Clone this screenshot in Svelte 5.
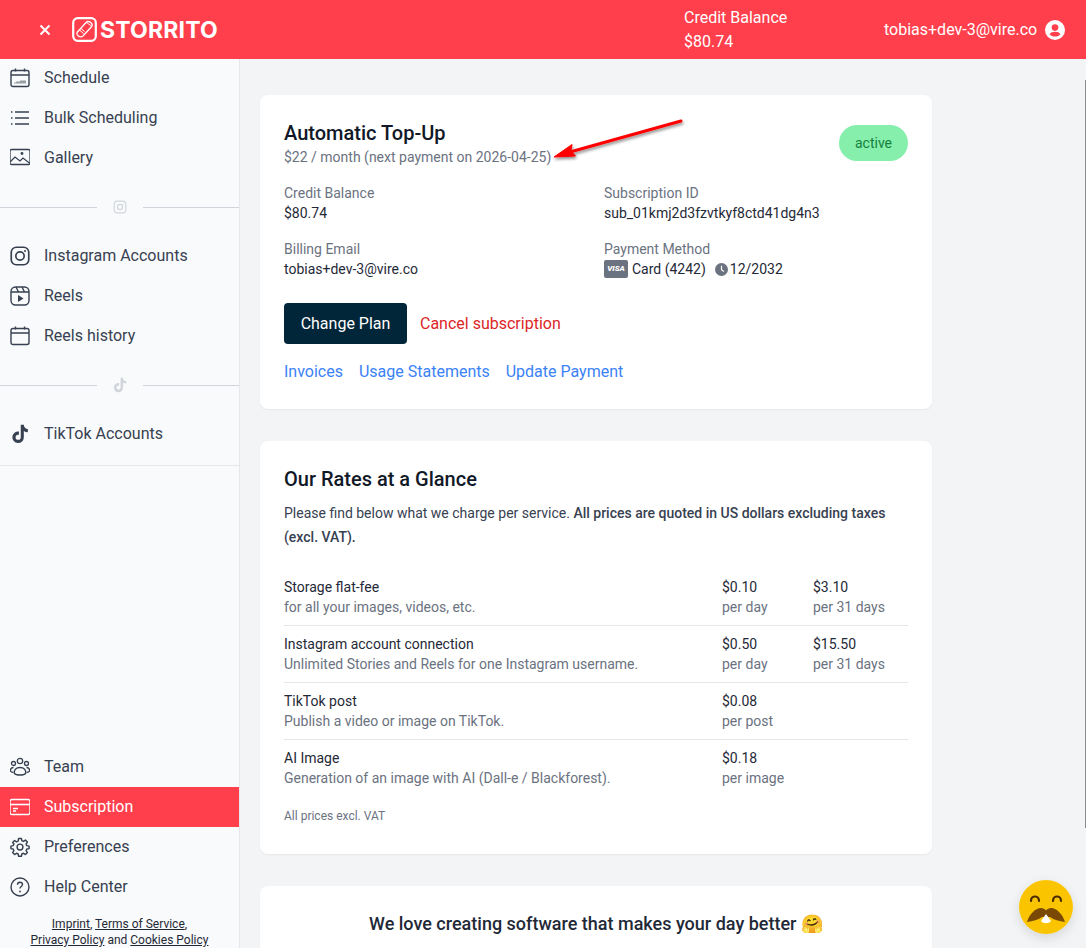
<script lang="ts">
	const rates = [
		{ name: 'Storage flat-fee', desc: 'for all your images, videos, etc.', price: '$0.10', unit: 'per day', month: '$3.10', monthUnit: 'per 31 days' },
		{ name: 'Instagram account connection', desc: 'Unlimited Stories and Reels for one Instagram username.', price: '$0.50', unit: 'per day', month: '$15.50', monthUnit: 'per 31 days' },
		{ name: 'TikTok post', desc: 'Publish a video or image on TikTok.', price: '$0.08', unit: 'per post' },
		{ name: 'AI Image', desc: 'Generation of an image with AI (Dall-e / Blackforest).', price: '$0.18', unit: 'per image' }
	];
</script>

{#snippet tiktok(size)}
	<svg width={size} height={size} viewBox="0 0 24 24" fill="currentColor"><path d="M16.6 1h-3.7v14.9a3.1 3.1 0 1 1-3.1-3.1c.3 0 .6 0 .9.1V9.1a6.9 6.9 0 1 0 5.9 6.8V8.3a8.3 8.3 0 0 0 4.8 1.5V6.1a4.9 4.9 0 0 1-4.8-5.1z"/></svg>
{/snippet}

{#snippet insta(size)}
	<svg width={size} height={size} viewBox="0 0 24 24" fill="none" stroke="currentColor" stroke-width="2"><rect x="2" y="2" width="20" height="20" rx="5.5"/><circle cx="12" cy="12" r="4.4"/><circle cx="17.6" cy="6.4" r="1" fill="currentColor" stroke="none"/></svg>
{/snippet}

<div class="app">
	<header class="topbar">
		<div class="brand">
			<svg class="close" width="12" height="12" viewBox="0 0 12 12" stroke="#fff" stroke-width="2"><path d="M1.5 1.5l9 9M10.5 1.5l-9 9"/></svg>
			<svg class="logo" width="25" height="25" viewBox="0 0 25 25" fill="none" stroke="#fff"><rect x="1.2" y="1.2" width="22.6" height="22.6" rx="4.5" stroke-width="2.2"/><path d="M5 15.5L14 5.5c1-1 3-1.2 4.500-.2 1.500 1 2 3 1 4.500L11 19c-1.500 1.200-3.500 1-5-.2-1.200-1-1.500-2.300-1-3.300z" stroke-width="1.300"/><path d="M14 5.500c1.500.5 4.500 2.500 5.500 4.300M7.500 13l4 3.500M9 11.500l3.500 3" stroke-width="1"/></svg>
			<span class="wordmark">STORRITO</span>
		</div>
		<div class="balance"><div>Credit Balance</div><div>$80.74</div></div>
		<div class="user">
			<span>tobias+dev-3@vire.co</span>
			<svg width="20" height="20" viewBox="0 0 20 20"><circle cx="10" cy="10" r="10" fill="#fff"/><circle cx="10" cy="7.600" r="3.300" fill="#ff3f4c"/><path d="M4.500 14.200c1-1.700 3-2.500 5.500-2.500s4.500.8 5.500 2.500c-1.300 1.500-3.300 2.400-5.500 2.400s-4.200-.9-5.500-2.400z" fill="#ff3f4c"/></svg>
		</div>
	</header>

	<div class="body">
		<aside class="sidebar">
			<nav class="top">
				<a class="item" href="#a">
					<svg width="20" height="20" viewBox="0 0 20 20" fill="none" stroke="currentColor" stroke-width="1.400"><rect x="1" y="2.500" width="18" height="16" rx="2"/><path d="M1 7h18M5.500.5v3M14.500.5v3"/><path d="M5 15.500v-1M7 15.500v-2M9 15.500v-2M11 15.500v-3M13 15.500v-3M15 15.500v-3" stroke-width="1"/></svg>
					Schedule
				</a>
				<a class="item" href="#a">
					<svg width="20" height="20" viewBox="0 0 20 20" fill="none" stroke="currentColor" stroke-width="1.400"><path d="M5 4h14M5 10h14M5 16h14"/><path d="M1 4h1.500M1 10h1.500M1 16h1.500" stroke-dasharray="1.500 0"/></svg>
					Bulk Scheduling
				</a>
				<a class="item" href="#a">
					<svg width="20" height="20" viewBox="0 0 20 20" fill="none" stroke="currentColor" stroke-width="1.300"><rect x="0" y="1.500" width="20" height="15" rx="1.500"/><path d="M0 14l5-5 5 4 3-3 7 5.500"/><circle cx="12" cy="5.500" r=".8" fill="currentColor"/></svg>
					Gallery
				</a>
				<div class="divider"><span class="faint">{@render insta(14)}</span></div>
				<a class="item" href="#a">
					<svg width="20" height="20" viewBox="0 0 24 24" fill="none" stroke="currentColor" stroke-width="2"><rect x="1.500" y="1.500" width="21" height="21" rx="6"/><circle cx="12" cy="12" r="5"/><circle cx="18" cy="6" r="1.200" fill="currentColor" stroke="none"/></svg>
					Instagram Accounts
				</a>
				<a class="item" href="#a">
					<svg width="20" height="20" viewBox="0 0 20 20" fill="none" stroke="currentColor" stroke-width="1.400"><rect x="1" y="1" width="18" height="18" rx="4.500"/><path d="M1 6h18M6 1l2.500 5M12 1l2.500 5"/><path d="M8 9l5.500 3.500L8 16z" fill="currentColor" stroke="none"/></svg>
					Reels
				</a>
				<a class="item" href="#a">
					<svg width="20" height="20" viewBox="0 0 20 20" fill="none" stroke="currentColor" stroke-width="1.400"><rect x="1" y="2.500" width="18" height="16" rx="2"/><path d="M1 7h18M5.500.5v3M14.500.5v3"/></svg>
					Reels history
				</a>
				<div class="divider"><span class="faint">{@render tiktok(16)}</span></div>
				<a class="item" href="#a">
					{@render tiktok(20)}
					TikTok Accounts
				</a>
				<div class="rule"></div>
			</nav>

			<nav class="bottom">
				<a class="item" href="#a">
					<svg width="20" height="20" viewBox="0 0 20 20" fill="none" stroke="currentColor" stroke-width="1.300"><circle cx="10" cy="4" r="2.700"/><circle cx="3.500" cy="6.500" r="2"/><circle cx="16.500" cy="6.500" r="2"/><path d="M4.500 16.500c-1-3.500 1.500-6 5.500-6s6.500 2.500 5.500 6c-1.500 2-9.500 2-11 0z"/><path d="M3.500 10.500C1.500 10.500.2 12 .5 14c.3.8 1.500 1.300 3 1.500M16.500 10.500c2 0 3.300 1.500 3 3.500-.3.800-1.500 1.300-3 1.500"/></svg>
					Team
				</a>
				<a class="item active" href="#a">
					<svg width="20" height="20" viewBox="0 0 20 20" fill="none" stroke="currentColor" stroke-width="1.400"><rect x="0" y="2.500" width="20" height="15" rx="2"/><path d="M0 7.500h20" stroke-width="1.600"/><path d="M3 11.500h5M3 14h3"/></svg>
					Subscription
				</a>
				<a class="item" href="#a">
					<svg width="20" height="20" viewBox="0 0 24 24" fill="none" stroke="currentColor" stroke-width="1.700" stroke-linejoin="round"><path d="M10.300 2.500h3.400l.5 2.700 2 .9 2.300-1.600 2.400 2.400-1.600 2.300.9 2 2.700.5v3l-2.700.5-.9 2 1.600 2.300-2.400 2.400-2.300-1.600-2 .9-.5 2.700h-3.400l-.5-2.700-2-.9-2.300 1.600-2.400-2.400 1.600-2.300-.9-2-2.700-.5v-3l2.700-.5.900-2L3.100 7.400l2.400-2.400 2.300 1.600 2-.9z" transform="translate(0 -.8)"/><circle cx="12" cy="12" r="3.500"/></svg>
					Preferences
				</a>
				<a class="item" href="#a">
					<svg width="20" height="20" viewBox="0 0 20 20" fill="none" stroke="currentColor" stroke-width="1.400"><circle cx="10" cy="10" r="9"/><path d="M7.500 7.700c0-1.500 1.100-2.500 2.500-2.500s2.500 1 2.500 2.300c0 2-2.500 2-2.500 4"/><circle cx="10" cy="14.500" r=".9" fill="currentColor" stroke="none"/></svg>
					Help Center
				</a>
				<div class="legal">
					<a href="#a">Imprint</a>, <a href="#a">Terms of Service</a>,<br />
					<a href="#a">Privacy Policy</a> and <a href="#a">Cookies Policy</a>
				</div>
			</nav>
		</aside>

		<main class="content">
			<section class="card plan">
				<div class="plan-head">
					<div>
						<h2>Automatic Top-Up</h2>
						<p class="muted">$22 / month (next payment on 2026-04-25)</p>
					</div>
					<span class="badge">active</span>
				</div>
				<dl class="facts">
					<div><dt>Credit Balance</dt><dd>$80.74</dd></div>
					<div><dt>Subscription ID</dt><dd>sub_01kmj2d3fzvtkyf8ctd41dg4n3</dd></div>
					<div><dt>Billing Email</dt><dd>tobias+dev-3@vire.co</dd></div>
					<div>
						<dt>Payment Method</dt>
						<dd class="pay">
							<span class="visa">VISA</span>
							<span>Card (4242)</span>
							<svg class="clock" width="13" height="13" viewBox="0 0 14 14"><circle cx="7" cy="7" r="7" fill="#6b7280"/><path d="M7 3v4.200l2.500 2" fill="none" stroke="#fff" stroke-width="1.300"/></svg>
							<span class="expiry">12/2032</span>
						</dd>
					</div>
				</dl>
				<div class="actions">
					<button class="primary">Change Plan</button>
					<a class="cancel" href="#a">Cancel subscription</a>
				</div>
				<div class="links">
					<a href="#a">Invoices</a>
					<a href="#a">Usage Statements</a>
					<a href="#a">Update Payment</a>
				</div>
				<svg class="arrow" width="140" height="50" viewBox="0 0 140 50">
					<defs><filter id="sh" x="-20%" y="-50%" width="140%" height="200%"><feDropShadow dx="1" dy="2" stdDeviation="1.500" flood-color="#000" flood-opacity=".45"/></filter></defs>
					<g filter="url(#sh)"><path d="M131 6L20 37" stroke="#f00" stroke-width="3" stroke-linecap="round"/><path d="M4 42L22 29.500l-1 6.500 4.500 5z" fill="#f00" stroke="#f00" stroke-linejoin="round"/></g>
				</svg>
			</section>

			<section class="card rates">
				<h2>Our Rates at a Glance</h2>
				<p class="intro">Please find below what we charge per service. <strong>All prices are quoted in US dollars excluding taxes (excl. VAT).</strong></p>
				<div class="table">
					{#each rates as r}
						<div class="row">
							<div class="cell-name"><div>{r.name}</div><div class="muted">{r.desc}</div></div>
							<div class="cell-price"><div>{r.price}</div><div class="muted">{r.unit}</div></div>
							<div class="cell-month">{#if r.month}<div>{r.month}</div><div class="muted">{r.monthUnit}</div>{/if}</div>
						</div>
					{/each}
				</div>
				<p class="note">All prices excl. VAT</p>
			</section>

			<section class="card love">
				<h3>We love creating software that makes your day better 🤗</h3>
			</section>
		</main>
	</div>

	<div class="scrollbar"></div>

	<button class="help" aria-label="Open chat">
		<svg width="54" height="54" viewBox="0 0 54 54">
			<circle cx="27" cy="27" r="27" fill="#fac500"/>
			<path d="M12 24c0-6 8-6 8 0M34 24c0-6 8-6 8 0" transform="translate(0 -3)" fill="none" stroke="#4d2d00" stroke-width="2.200" stroke-linecap="round"/>
			<path d="M8 42c2-7 8-14 14-14 2 0 4 1 5 2.500 1-1.500 3-2.500 5-2.500 6 0 12 7 14 14-6-1-11-2-15-5h-8c-4 3-9 4-15 5z" fill="#7a4a05"/>
			<path d="M22 41l5-7 5 7c-2 3-8 3-10 0z" fill="#fff"/>
		</svg>
	</button>
</div>

<style>
	:global(body) {
		margin: 0;
		background: #f3f4f6;
		overflow: hidden;
	}

	.app {
		position: relative;
		height: 948px;
		overflow: hidden;
		font-family: Roboto, "Liberation Sans", sans-serif;
		font-size: 16px;
		color: #1f2937;
		display: flex;
		flex-direction: column;
	}

	.topbar {
		flex: none;
		height: 59px;
		background: #ff3f4c;
		color: #fff;
		display: flex;
		align-items: center;
	}

	.brand {
		width: 684px;
		display: flex;
		align-items: center;
		padding-left: 39px;
		box-sizing: border-box;
	}

	.close {
		margin-right: 21px;
	}

	.logo {
		margin-right: 3px;
	}

	.wordmark {
		font-family: Inter, Roboto, sans-serif;
		font-weight: 700;
		font-size: 23px;
		letter-spacing: 0.2px;
	}

	.balance {
		width: 200px;
		line-height: 24px;
	}

	.user {
		display: flex;
		align-items: center;
		gap: 8px;
	}

	.body {
		flex: 1;
		display: flex;
		min-height: 0;
	}

	.sidebar {
		flex: none;
		width: 239px;
		background: #f9fafb;
		border-right: 1px solid #e5e7eb;
		display: flex;
		flex-direction: column;
		justify-content: space-between;
	}

	.item {
		display: flex;
		align-items: center;
		gap: 14px;
		height: 40px;
		padding-left: 10px;
		color: #374151;
		text-decoration: none;
		line-height: 24px;
	}

	.item svg {
		flex: none;
	}

	.item.active {
		background: #ff3f4c;
		color: #fff;
	}

	.top {
		margin-top: -1px;
	}

	.divider {
		display: flex;
		align-items: center;
		gap: 12px;
		height: 16px;
		margin: 21px 0;
		color: #d1d5db;
	}

	.divider::before,
	.divider::after {
		content: "";
		height: 1px;
		background: #d1d5db;
		flex: 1;
	}

	.faint {
		display: flex;
		width: 22px;
		justify-content: center;
	}

	.rule {
		height: 1px;
		margin-top: 11px;
		background: #e5e7eb;
	}

	.bottom {
		display: flex;
		flex-direction: column;
	}

	.legal {
		font-size: 12px;
		line-height: 16px;
		text-align: center;
		padding: 9px 0 0;
		height: 32px;
		color: #1f2937;
	}

	.legal a {
		color: inherit;
	}

	.content {
		flex: 1;
		padding: 36px 154px 0 20px;
		display: flex;
		flex-direction: column;
		gap: 32px;
		min-width: 0;
	}

	.card {
		background: #fff;
		border-radius: 8px;
		box-shadow: 0 1px 2px rgba(0, 0, 0, 0.05);
		padding: 24px;
		flex: none;
	}

	.plan {
		position: relative;
		height: 314px;
		box-sizing: border-box;
	}

	.plan-head {
		display: flex;
		justify-content: space-between;
		align-items: center;
	}

	h2 {
		margin: 0;
		font-size: 20px;
		line-height: 28px;
		font-weight: 500;
		color: #111827;
	}

	.plan-head p {
		margin: 0;
		line-height: 20px;
	}

	.muted,
	dt {
		font-size: 14px;
		color: #6b7280;
	}

	.badge {
		background: #86efac;
		color: #15803d;
		font-size: 14px;
		height: 36px;
		line-height: 36px;
		padding: 0 16px;
		border-radius: 18px;
	}

	.facts {
		margin: 16px 0 0;
		display: grid;
		grid-template-columns: 320px 1fr;
		row-gap: 16px;
	}

	dt {
		line-height: 20px;
	}

	dd {
		margin: 0;
		font-size: 14px;
		line-height: 20px;
		color: #1f2937;
	}

	.pay {
		display: flex;
		align-items: center;
	}

	.visa {
		width: 24px;
		height: 18px;
		line-height: 18px;
		border-radius: 2px;
		background: #6b7280;
		color: #fff;
		font-size: 8px;
		font-weight: 900;
		font-style: italic;
		text-align: center;
		margin-right: 4px;
	}

	.clock {
		margin-left: 9px;
		margin-right: 2px;
	}

	.actions {
		margin-top: 24px;
		display: flex;
		align-items: center;
		gap: 13px;
	}

	.primary {
		width: 123px;
		height: 41px;
		background: #012639;
		color: #fff;
		border: 0;
		border-radius: 4px;
		font: inherit;
		padding: 0;
	}

	.cancel {
		color: #dc2626;
		text-decoration: none;
	}

	.links {
		margin-top: 16px;
		display: flex;
		gap: 16px;
		line-height: 24px;
	}

	.links a {
		color: #3b82f6;
		text-decoration: none;
	}

	.arrow {
		position: absolute;
		left: 290px;
		top: 20px;
	}

	.rates {
		height: 413px;
		box-sizing: border-box;
	}

	.intro {
		margin: 8px 0 0;
		font-size: 14px;
		line-height: 24px;
		color: #374151;
	}

	strong {
		font-weight: 500;
	}

	.table {
		margin-top: 19px;
	}

	.row {
		display: grid;
		grid-template-columns: 438px 91px 1fr;
		height: 57px;
		box-sizing: border-box;
		padding-top: 8px;
		border-top: 1px solid #e5e7eb;
		font-size: 14px;
		line-height: 20px;
		color: #1f2937;
	}

	.row:first-child {
		border-top: 0;
		padding-top: 9px;
	}

	.note {
		margin: 12px 0 0;
		font-size: 12px;
		line-height: 16px;
		color: #6b7280;
	}

	.love {
		height: 140px;
		box-sizing: border-box;
	}

	h3 {
		margin: 0;
		text-align: center;
		font-size: 18px;
		line-height: 28px;
		font-weight: 500;
		color: #1f2937;
	}

	.scrollbar {
		position: absolute;
		right: 0;
		top: 80px;
		bottom: 120px;
		width: 1px;
		background: #8a8a8a;
	}

	.help {
		position: absolute;
		left: 1019px;
		top: 880px;
		width: 54px;
		height: 54px;
		padding: 0;
		border: 0;
		background: none;
		border-radius: 50%;
		box-shadow: 0 4px 12px rgba(0, 0, 0, 0.12);
	}

	.help svg {
		display: block;
	}
</style>
